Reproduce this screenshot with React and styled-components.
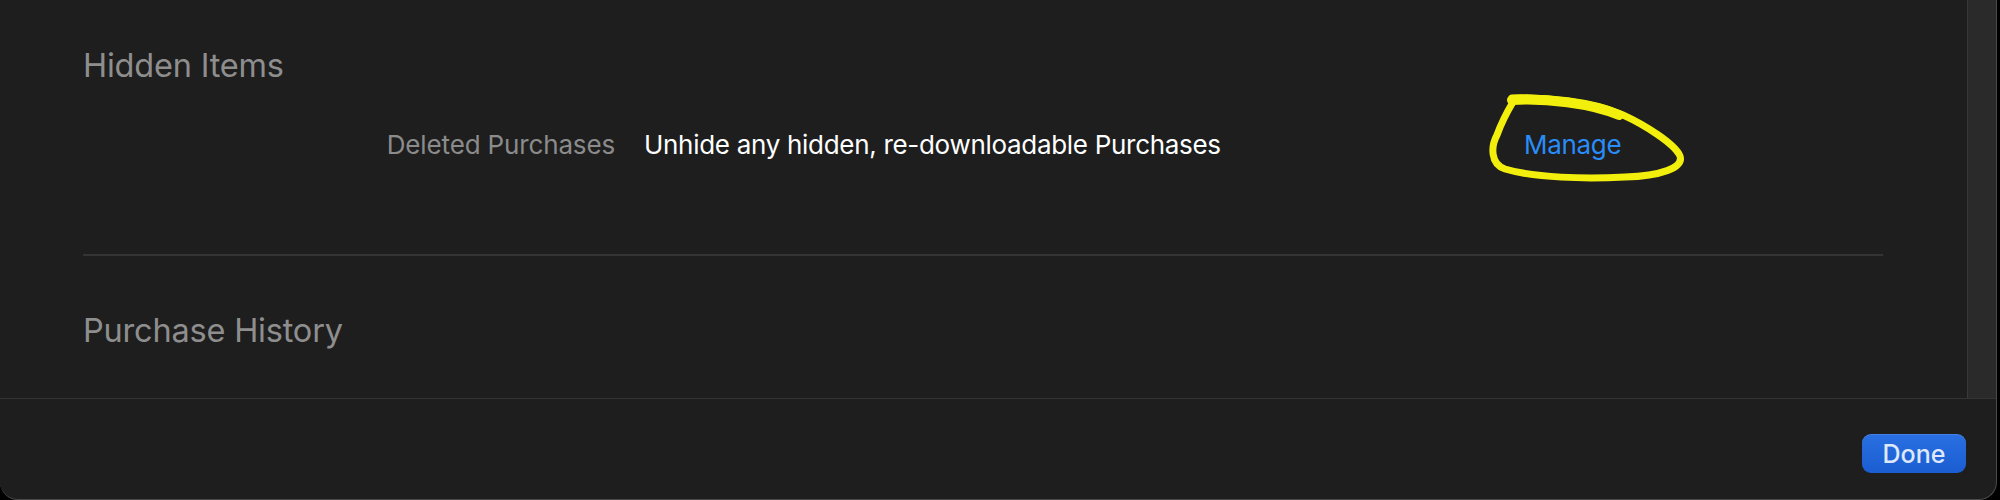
import React from 'react'
import styled, { createGlobalStyle } from 'styled-components'

const GlobalStyle = createGlobalStyle`
    html, body {
        margin: 0;
        padding: 0;
        background: #000;
        overflow: hidden;
    }
    body {
        font-family: Inter, "Noto Sans", "Liberation Sans", sans-serif;
        -webkit-font-smoothing: antialiased;
    }
`

export default function App() {
    return (
        <>
            <GlobalStyle />
            <Window>
                <Body>
                    <Content>
                        <Section>
                            <Heading>Hidden Items</Heading>
                            <Row>
                                <Label>Deleted Purchases</Label>
                                <Value>Unhide any hidden, re-downloadable Purchases</Value>
                                <ManageLink>
                                    Manage
                                    <Scribble viewBox="0 0 205 100" fill="none">
                                        <path
                                            d="M27 10 C60 9, 108 14, 138 27 C160 37, 190 56, 195 68 C199 80, 175 88, 140 89 C100 91, 50 90, 20 81 C5 76, 6 58, 12 47 C16 36, 22 24, 28 14"
                                            stroke="#f3ef0c"
                                            strokeWidth="7"
                                            strokeLinecap="round"
                                            strokeLinejoin="round"
                                        />
                                        <path
                                            d="M27 12 C60 10, 106 15, 134 27"
                                            stroke="#f3ef0c"
                                            strokeWidth="10"
                                            strokeLinecap="round"
                                        />
                                    </Scribble>
                                </ManageLink>
                            </Row>
                        </Section>
                        <Divider />
                        <Heading>Purchase History</Heading>
                    </Content>
                    <ScrollTrack />
                </Body>
                <Footer>
                    <DoneButton>Done</DoneButton>
                </Footer>
            </Window>
        </>
    )
}

const Window = styled.div`
    box-sizing: border-box;
    width: 1997px;
    height: 500px;
    display: flex;
    flex-direction: column;
    background: #1e1e1e;
    border-right: 1px solid #4a4a4a;
    border-bottom: 1px solid #4a4a4a;
    border-radius: 0 0 18px 18px;
    overflow: hidden;
`

const Body = styled.div`
    display: flex;
    height: 398px;
    border-bottom: 1px solid #343434;
`

const Content = styled.div`
    flex: 1;
    padding: 47px 84px 0 83px;
`

const Section = styled.div`
    display: flex;
    flex-direction: column;
    gap: 44px;
`

const Heading = styled.h2`
    margin: 0;
    font-size: 32.5px;
    line-height: 38px;
    font-weight: 400;
    color: #8e8e8e;
    letter-spacing: -0.2px;
`

const Row = styled.div`
    display: grid;
    grid-template-columns: 532px 851px auto;
    column-gap: 29px;
    align-items: center;
    font-size: 26px;
    line-height: 32px;
    letter-spacing: -0.15px;
`

const Label = styled.span`
    text-align: right;
    color: #8b8b8b;
`

const Value = styled.span`
    color: #ffffff;
    letter-spacing: -0.3px;
`

const ManageLink = styled.span`
    position: relative;
    color: #2a8cf6;
    letter-spacing: -0.3px;
    cursor: pointer;
`

const Scribble = styled.svg`
    position: absolute;
    left: -39px;
    top: -41px;
    width: 205px;
    height: 100px;
    overflow: visible;
    pointer-events: none;
`

const Divider = styled.div`
    height: 2px;
    background: #343434;
    margin: 93px 0 56px;
`

const ScrollTrack = styled.div`
    width: 28px;
    background: #2a2a2a;
    border-left: 1px solid #383838;
`

const Footer = styled.div`
    flex: 1;
    display: flex;
    justify-content: flex-end;
    align-items: flex-start;
    padding: 35px 30px 0 0;
`

const DoneButton = styled.button`
    box-sizing: border-box;
    width: 104px;
    height: 39px;
    border: none;
    border-radius: 9px;
    background: linear-gradient(#2a70e2, #1a5dd2);
    box-shadow: inset 0 1px 0 rgba(255, 255, 255, 0.12);
    color: #dfe9fb;
    font-family: Inter, "Noto Sans", sans-serif;
    font-size: 25px;
    font-weight: 500;
    padding: 0;
    cursor: pointer;
`
